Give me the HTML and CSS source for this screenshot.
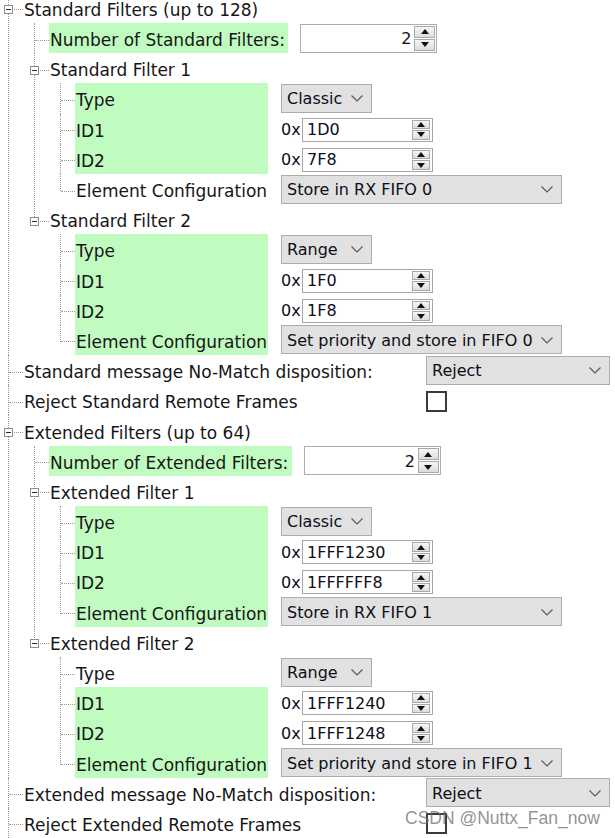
FILE: index.html
```html
<!DOCTYPE html>
<html>
<head>
<meta charset="utf-8">
<title>CAN Filters</title>
<link rel="stylesheet" href="styles.css">
</head>
<body>
<div class="panel">
<ul class="tree root">
  <li>
    <div class="row"><span class="gut br"><span class="tog"></span></span><span class="lbl">Standard Filters (up to 128)</span></div>
    <ul class="tree">
      <li>
        <div class="row"><span class="gut"></span><span class="lbl hl num">Number of Standard Filters:</span>
          <span class="spin"><span class="val">2</span><span class="btns"><span class="sb up"></span><span class="sb dn"></span></span></span></div>
      </li>
      <li>
        <div class="row"><span class="gut br"><span class="tog"></span></span><span class="lbl">Standard Filter 1</span></div>
        <ul class="tree">
          <li><div class="row"><span class="gut"></span><span class="lbl hl prop">Type</span>
            <span class="combo sm"><span class="txt">Classic</span><svg class="chev" width="12" height="7" viewBox="0 0 12 7"><polyline points="0.5,0.5 6,6 11.5,0.5"/></svg></span></div></li>
          <li><div class="row"><span class="gut"></span><span class="lbl hl prop">ID1</span>
            <span class="ox">0x</span><span class="field"><span class="val">1D0</span><span class="btns"><span class="sb up"></span><span class="sb dn"></span></span></span></div></li>
          <li><div class="row"><span class="gut"></span><span class="lbl hl prop">ID2</span>
            <span class="ox">0x</span><span class="field"><span class="val">7F8</span><span class="btns"><span class="sb up"></span><span class="sb dn"></span></span></span></div></li>
          <li><div class="row"><span class="gut"></span><span class="lbl prop">Element Configuration</span>
            <span class="combo md"><span class="txt">Store in RX FIFO 0</span><svg class="chev" width="12" height="7" viewBox="0 0 12 7"><polyline points="0.5,0.5 6,6 11.5,0.5"/></svg></span></div></li>
        </ul>
      </li>
      <li>
        <div class="row"><span class="gut br"><span class="tog"></span></span><span class="lbl">Standard Filter 2</span></div>
        <ul class="tree">
          <li><div class="row"><span class="gut"></span><span class="lbl hl prop">Type</span>
            <span class="combo sm"><span class="txt">Range</span><svg class="chev" width="12" height="7" viewBox="0 0 12 7"><polyline points="0.5,0.5 6,6 11.5,0.5"/></svg></span></div></li>
          <li><div class="row"><span class="gut"></span><span class="lbl hl prop">ID1</span>
            <span class="ox">0x</span><span class="field"><span class="val">1F0</span><span class="btns"><span class="sb up"></span><span class="sb dn"></span></span></span></div></li>
          <li><div class="row"><span class="gut"></span><span class="lbl hl prop">ID2</span>
            <span class="ox">0x</span><span class="field"><span class="val">1F8</span><span class="btns"><span class="sb up"></span><span class="sb dn"></span></span></span></div></li>
          <li><div class="row"><span class="gut"></span><span class="lbl hl prop">Element Configuration</span>
            <span class="combo md"><span class="txt">Set priority and store in FIFO 0</span><svg class="chev" width="12" height="7" viewBox="0 0 12 7"><polyline points="0.5,0.5 6,6 11.5,0.5"/></svg></span></div></li>
        </ul>
      </li>
    </ul>
  </li>
  <li><div class="row"><span class="gut"></span><span class="lbl wide">Standard message No-Match disposition:</span>
    <span class="combo lg"><span class="txt">Reject</span><svg class="chev" width="12" height="7" viewBox="0 0 12 7"><polyline points="0.5,0.5 6,6 11.5,0.5"/></svg></span></div></li>
  <li><div class="row"><span class="gut"></span><span class="lbl wide">Reject Standard Remote Frames</span><span class="check"></span></div></li>
  <li>
    <div class="row"><span class="gut br"><span class="tog"></span></span><span class="lbl">Extended Filters (up to 64)</span></div>
    <ul class="tree">
      <li>
        <div class="row"><span class="gut"></span><span class="lbl hl num">Number of Extended Filters:</span>
          <span class="spin"><span class="val">2</span><span class="btns"><span class="sb up"></span><span class="sb dn"></span></span></span></div>
      </li>
      <li>
        <div class="row"><span class="gut br"><span class="tog"></span></span><span class="lbl">Extended Filter 1</span></div>
        <ul class="tree">
          <li><div class="row"><span class="gut"></span><span class="lbl hl prop">Type</span>
            <span class="combo sm"><span class="txt">Classic</span><svg class="chev" width="12" height="7" viewBox="0 0 12 7"><polyline points="0.5,0.5 6,6 11.5,0.5"/></svg></span></div></li>
          <li><div class="row"><span class="gut"></span><span class="lbl hl prop">ID1</span>
            <span class="ox">0x</span><span class="field"><span class="val">1FFF1230</span><span class="btns"><span class="sb up"></span><span class="sb dn"></span></span></span></div></li>
          <li><div class="row"><span class="gut"></span><span class="lbl hl prop">ID2</span>
            <span class="ox">0x</span><span class="field"><span class="val">1FFFFFF8</span><span class="btns"><span class="sb up"></span><span class="sb dn"></span></span></span></div></li>
          <li><div class="row"><span class="gut"></span><span class="lbl hl prop">Element Configuration</span>
            <span class="combo md"><span class="txt">Store in RX FIFO 1</span><svg class="chev" width="12" height="7" viewBox="0 0 12 7"><polyline points="0.5,0.5 6,6 11.5,0.5"/></svg></span></div></li>
        </ul>
      </li>
      <li>
        <div class="row"><span class="gut br"><span class="tog"></span></span><span class="lbl">Extended Filter 2</span></div>
        <ul class="tree">
          <li><div class="row"><span class="gut"></span><span class="lbl prop">Type</span>
            <span class="combo sm"><span class="txt">Range</span><svg class="chev" width="12" height="7" viewBox="0 0 12 7"><polyline points="0.5,0.5 6,6 11.5,0.5"/></svg></span></div></li>
          <li><div class="row"><span class="gut"></span><span class="lbl hl prop">ID1</span>
            <span class="ox">0x</span><span class="field"><span class="val">1FFF1240</span><span class="btns"><span class="sb up"></span><span class="sb dn"></span></span></span></div></li>
          <li><div class="row"><span class="gut"></span><span class="lbl hl prop">ID2</span>
            <span class="ox">0x</span><span class="field"><span class="val">1FFF1248</span><span class="btns"><span class="sb up"></span><span class="sb dn"></span></span></span></div></li>
          <li><div class="row"><span class="gut"></span><span class="lbl hl prop">Element Configuration</span>
            <span class="combo md"><span class="txt">Set priority and store in FIFO 1</span><svg class="chev" width="12" height="7" viewBox="0 0 12 7"><polyline points="0.5,0.5 6,6 11.5,0.5"/></svg></span></div></li>
        </ul>
      </li>
    </ul>
  </li>
  <li><div class="row"><span class="gut"></span><span class="lbl wide">Extended message No-Match disposition:</span>
    <span class="combo lg"><span class="txt">Reject</span><svg class="chev" width="12" height="7" viewBox="0 0 12 7"><polyline points="0.5,0.5 6,6 11.5,0.5"/></svg></span></div></li>
  <li><div class="row"><span class="gut"></span><span class="lbl wide">Reject Extended Remote Frames</span><span class="check"></span></div></li>
</ul>
<div class="watermark">CSDN @Nuttx_Fan_now</div>
</div>
</body>
</html>
```
FILE: styles.css
```css
* { box-sizing: border-box; }
html, body { margin: 0; padding: 0; overflow: hidden; background: #ffffff; }
body {
  font-family: "DejaVu Sans", Verdana, sans-serif;
  font-size: 17px;
  color: #161616;
}
.panel { position: relative; margin-top: -7.2px; height: 846px; }

.tree { list-style: none; margin: 0; padding: 0 0 0 26px; }
.tree.root { padding-left: 0; }
.tree li { position: relative; }
.tree li::after {
  content: "";
  position: absolute;
  left: 8px; top: 0; bottom: 0;
  border-left: 1px dotted #9a9a9a;
}
.tree .tree li:last-child::after { bottom: auto; height: 17px; }

.row {
  display: flex;
  align-items: center;
  height: 30.2px;
}
.gut {
  width: 23px;
  height: 100%;
  display: flex;
  align-items: center;
  padding-left: 9px;
  padding-top: 4px;
  flex: none;
}
.gut::after {
  content: "";
  flex: 1;
  border-top: 1px dotted #9a9a9a;
}
.gut.br { padding-left: 4px; }
.tog {
  position: relative;
  z-index: 1;
  width: 9px; height: 9px;
  border: 1px solid #8e8e8e;
  background: #fff;
  display: flex;
  align-items: center;
  justify-content: center;
  margin-right: 1px;
}
.tog::after { content: ""; width: 5px; height: 1px; background: #2a2a2a; }

.lbl {
  height: 100%;
  display: flex;
  align-items: center;
  padding: 4px 1px 0 1px;
  white-space: nowrap;
  flex: none;
}
.hl { background: #c0fcc0; }
.num { padding-right: 3.5px; margin-right: 12px; }
.prop { width: 193px; margin-right: 13px; }
.wide { width: 403px; }

.combo {
  height: 29px;
  border: 1px solid #adadad;
  background: #e1e1e1;
  display: flex;
  align-items: center;
  padding: 1px 0 0 5px;
  font-size: 16px;
  color: #0e0e18;
  flex: none;
}
.combo .txt { flex: 1; white-space: nowrap; }
.chev { fill: none; stroke: #5a5a5a; stroke-width: 1.2; margin-right: 8px; }
.combo.sm { width: 91px; }
.combo.md { width: 281px; }
.combo.lg { width: 184px; }

.ox { width: 21px; font-size: 16px; color: #0e0e18; flex: none; padding-top: 2px; }
.field {
  width: 131px; height: 24px;
  border: 1px solid #a6a6a6;
  background: #fff;
  display: flex;
  align-items: stretch;
  padding: 1px 2px 1px 4px;
  font-size: 16px;
  color: #0e0e18;
  flex: none;
  margin-top: 2px;
}
.field .val { flex: 1; display: flex; align-items: center; }
.field .btns { width: 18px; }

.spin {
  width: 137px; height: 29px;
  border: 1px solid #adadad;
  background: #fff;
  display: flex;
  align-items: stretch;
  padding: 1px 1px 1px 4px;
  font-size: 16px;
  color: #0e0e18;
  flex: none;
}
.spin .val { flex: 1; display: flex; align-items: center; justify-content: flex-end; padding-right: 3px; padding-top: 1px; }
.spin .btns { width: 21px; }

.btns { display: flex; flex-direction: column; gap: 1px; flex: none; }
.sb {
  flex: 1;
  background: linear-gradient(#f6f6f6, #dcdcdc);
  border: 1px solid #a9a9a9;
  display: flex;
  align-items: center;
  justify-content: center;
}
.sb.up::after {
  content: "";
  border-left: 4.5px solid transparent;
  border-right: 4.5px solid transparent;
  border-bottom: 5px solid #111;
}
.sb.dn::after {
  content: "";
  border-left: 4.5px solid transparent;
  border-right: 4.5px solid transparent;
  border-top: 5px solid #111;
}

.check {
  width: 21px; height: 21px;
  border: 2px solid #3a3a3a;
  background: #fff;
  flex: none;
  margin-top: 2px;
}

.watermark {
  position: absolute;
  left: 405px;
  top: 815px;
  font-family: "Liberation Sans", Arial, sans-serif;
  font-size: 17.5px;
  color: rgba(110, 110, 110, 0.75);
  white-space: nowrap;
}
```
